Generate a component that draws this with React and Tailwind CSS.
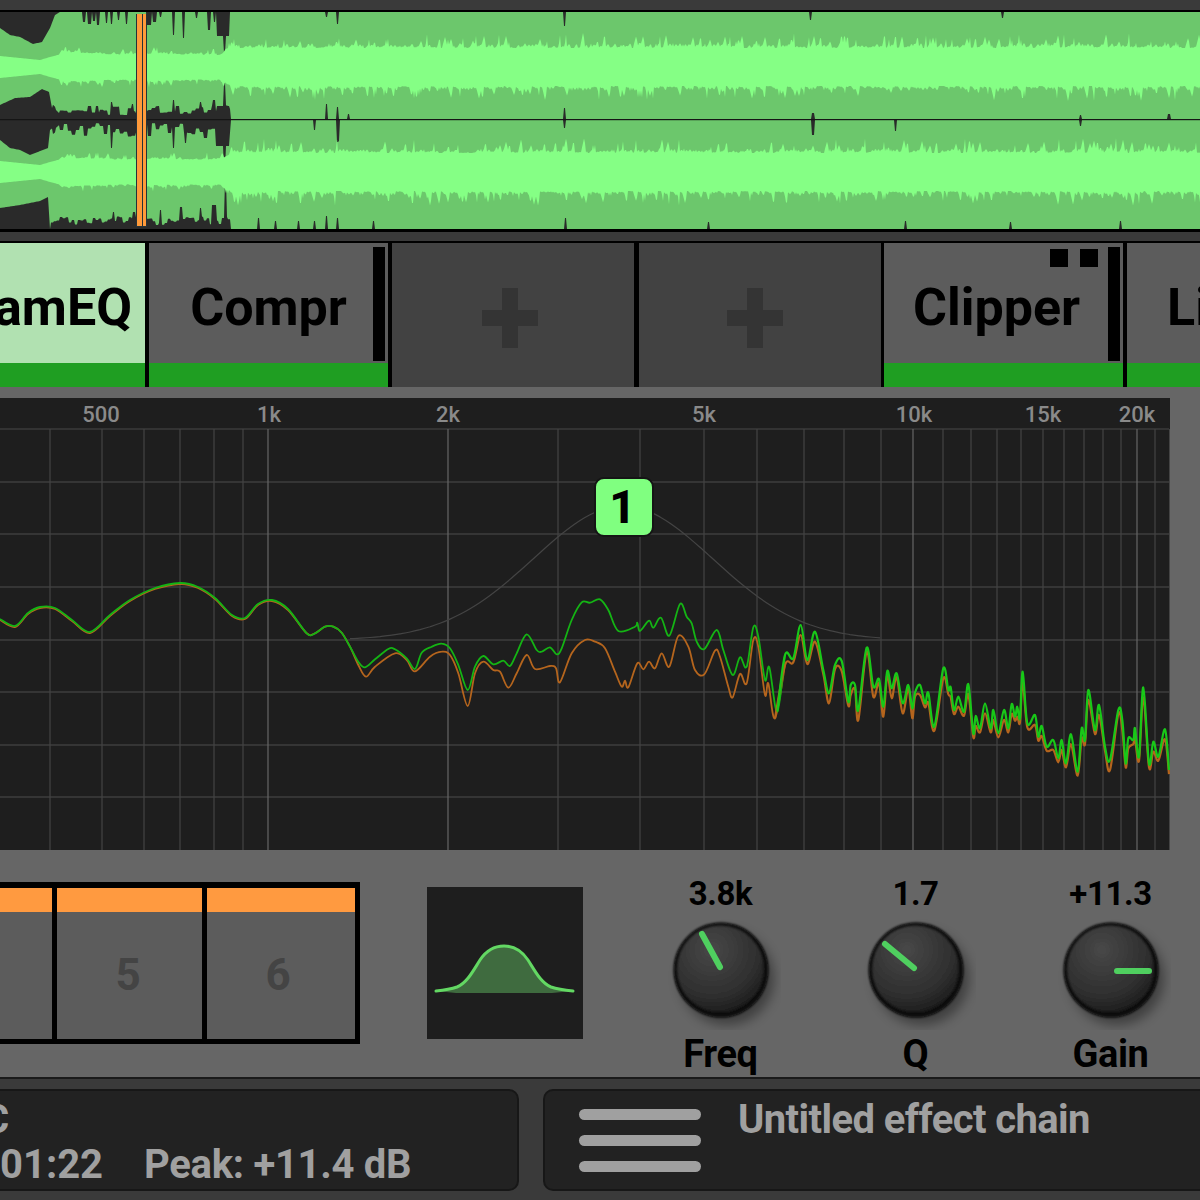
import React from 'react';

// small seeded generator so the waveform is the same on every render
const makeRand = (seed) => () => {
  seed = (seed * 1664525 + 1013904223) % 4294967296;
  return seed / 4294967296;
};

const lerp = (pts, x) => {
  for (let i = 1; i < pts.length; i++) {
    if (x <= pts[i][0]) {
      const [x0, y0] = pts[i - 1];
      const [x1, y1] = pts[i];
      return y0 + ((y1 - y0) * (x - x0)) / (x1 - x0 || 1);
    }
  }
  return pts[pts.length - 1][1];
};

const applySpikes = (arr, spikes, isTop) => {
  spikes.forEach(([x, y, w = 2]) => {
    for (let i = x; i < x + w; i++) arr[i] = isTop ? Math.max(arr[i], y) : Math.min(arr[i], y);
  });
};

const band = (top, bot) => {
  const a = top.map((y, x) => `${x},${y.toFixed(1)}`);
  const b = bot.map((y, x) => `${x},${y.toFixed(1)}`).reverse();
  return `M${a.join('L')}L${b.join('L')}Z`;
};

const buildWave = () => {
  const r = makeRand(71);
  const N = 1201;
  const col = (fn) => Array.from({ length: N }, (_, x) => fn(x));
  // noise held for a few pixels, the dark part near the axis is blocky
  const blocky = (amp, size) => {
    const out = [];
    let v = 0;
    for (let x = 0; x < N; x++) {
      if (x % size === 0) v = r() * amp;
      out.push(v);
    }
    return out;
  };
  const n1 = blocky(9, 4);
  const n2 = blocky(15, 4);
  const n3 = blocky(9, 3);

  const t1 = col((x) => lerp([[0, 28], [10, 35], [20, 37], [33, 44], [42, 42], [50, 28], [55, 15], [60, 12], [1200, 12]], x));
  const b1 = col((x) => lerp([[0, 105], [15, 98], [30, 97], [42, 89], [49, 92], [52, 108], [60, 116], [230, 114], [231, 119], [1200, 119]], x) - (x > 52 && x < 231 ? n1[x] : 0));
  const t2 = col((x) => lerp([[0, 140], [10, 148], [20, 150], [30, 155], [48, 148], [50, 130], [60, 122], [230, 124], [231, 120], [1200, 120]], x) + (x > 52 && x < 231 ? n2[x] : 0));
  const b2 = col((x) => lerp([[0, 208], [20, 205], [40, 201], [48, 197], [50, 229], [1200, 229]], x) - (x > 50 && x < 231 ? 4 + n3[x] : 0));

  applySpikes(t1, [[83, 22, 3], [88, 24, 4], [93, 21, 3], [97, 25, 3], [106, 23, 2], [111, 24, 2], [118, 20, 2], [126, 24, 2], [147, 25, 5], [153, 22, 4], [160, 17, 2], [173, 35, 2], [183, 38, 2], [196, 18, 2], [208, 30, 3], [214, 22, 2], [217, 36, 13], [224, 53, 2], [326, 17, 2], [337, 24, 2], [564, 26, 2], [810, 20, 2], [1002, 18, 2]], true);
  applySpikes(b1, [[88, 106, 4], [96, 106, 3], [111, 102, 2], [132, 104, 2], [173, 100, 2], [200, 102, 2], [213, 100, 3], [217, 106, 13], [224, 83, 2], [326, 104, 2], [337, 107, 2], [348, 114, 2], [564, 108, 2], [812, 113, 3], [1080, 115, 2], [1168, 114, 3]], false);
  applySpikes(t2, [[111, 148, 2], [173, 148, 2], [185, 143, 2], [216, 146, 14], [224, 168, 2], [314, 130, 2], [337, 142, 2], [338, 141, 2], [564, 128, 2], [812, 135, 3], [895, 131, 2], [1080, 126, 2]], true);
  applySpikes(b2, [[113, 212, 2], [133, 212, 3], [160, 210, 2], [180, 207, 3], [200, 208, 2], [212, 205, 5], [225, 180, 2], [258, 218, 2], [275, 221, 2], [298, 221, 2], [314, 221, 2], [326, 216, 2], [337, 218, 2], [373, 221, 2], [565, 218, 2], [708, 222, 2], [905, 221, 2], [1010, 222, 2], [1120, 221, 2]], false);

  const hw = (x) => lerp([[0, 11], [40, 7], [50, 10], [65, 14], [130, 12], [150, 13], [220, 12], [232, 19], [1200, 19]], x);
  // wide teeth on the bright band, a few pixels each
  const teeth = () => {
    const out = col(() => 0);
    let x = 60;
    while (x < N) {
      const w = 2 + Math.floor(r() * 3);
      const h = (r() > 0.72 ? 6 + r() * 9 : r() * 5) * (x < 230 ? 0.5 : 1);
      for (let i = x; i < Math.min(x + w, N); i++) out[i] = h * (1 - Math.abs(i - x - w / 2) / (w * 0.8));
      x += w;
    }
    return out;
  };
  const inner = (c) => {
    const up = teeth();
    const down = teeth();
    return [col((x) => c - hw(x) - up[x]), col((x) => c + hw(x) + down[x])];
  };
  const [i1t, i1b] = inner(67);
  const [i2t, i2b] = inner(172);

  return { mid: band(t1, b1) + band(t2, b2), high: band(i1t, i1b) + band(i2t, i2b) };
};

const wave = buildWave();

const Waveform = () => (
  <svg viewBox="0 0 1200 217" className="block w-[1200px] h-[217px] bg-[#2a2a2a]">
    <g transform="translate(0,-12)">
      <path d={wave.mid} fill="#6cc76c" />
      <path d={wave.high} fill="#85ff85" />
      <rect x="0" y="119.2" width="1200" height="1" fill="#111" />
      <rect x="136" y="14" width="11" height="213" fill="#263238" />
      <rect x="137" y="14" width="5" height="212" fill="#ff9a3a" />
      <rect x="143" y="14" width="3" height="212" fill="#ff9a3a" />
    </g>
  </svg>
);

const vLines = [50, 102, 144, 180, 214, 243, 268, 448, 558, 640, 704, 757, 804, 844, 881, 913, 943, 971, 997, 1021, 1043, 1064, 1084, 1103, 1121, 1137, 1155];
const hLines = [482, 534, 587, 640, 692, 745, 797];
const freqLabels = [['500', 101], ['1k', 269], ['2k', 448], ['5k', 704], ['10k', 914], ['15k', 1043], ['20k', 1137]];

const z6 = (pts) => pts.map(([x, y]) => [300 + x / 3, 470 + y / 3]);
const z7 = (pts) => pts.map(([x, y]) => [780 + x / 3, 600 + y / 3]);

const leftPart = [[0, 619], [15, 626], [28, 613], [40, 607], [55, 608], [72, 620], [90, 632], [110, 615], [130, 600], [155, 588], [180, 583], [198, 587], [215, 598], [232, 615], [245, 618], [258, 604], [272, 600], [288, 609]];

const greenMid = z6([[20, 490], [45, 490], [75, 470], [100, 470], [125, 488], [150, 530], [175, 575], [195, 592], [225, 568], [265, 537], [285, 538], [320, 565], [345, 597], [365, 548], [395, 530], [425, 521], [450, 535], [475, 585], [503, 660], [525, 590], [550, 558], [580, 583], [610, 572], [630, 588], [650, 550], [680, 493], [710, 540], [725, 545], [750, 532], [770, 553], [785, 535], [815, 450], [845, 397], [870, 398], [900, 388], [925, 420], [955, 483], [1005, 470], [1012, 458], [1020, 483], [1047, 452], [1060, 473], [1083, 443], [1108, 497], [1140, 402], [1160, 440], [1175, 460], [1190, 515], [1213, 537], [1250, 480], [1270, 540], [1298, 615], [1320, 562], [1340, 590], [1360, 472], [1375, 500], [1395, 630], [1408, 592], [1432, 725]]);
const orangeMid = z6([[20, 490], [45, 490], [75, 470], [100, 470], [125, 488], [150, 530], [175, 585], [198, 620], [225, 590], [285, 550], [320, 570], [345, 604], [390, 560], [425, 545], [450, 555], [475, 610], [503, 708], [525, 610], [550, 575], [580, 600], [600, 605], [625, 653], [650, 610], [680, 555], [705, 597], [750, 588], [768, 595], [780, 637], [815, 550], [855, 510], [885, 515], [915, 535], [945, 605], [965, 650], [975, 632], [985, 652], [1012, 580], [1030, 598], [1047, 575], [1065, 595], [1085, 550], [1108, 590], [1135, 498], [1165, 530], [1185, 600], [1213, 613], [1245, 542], [1260, 560], [1285, 650], [1298, 682], [1320, 612], [1340, 640], [1360, 510], [1375, 530], [1395, 675], [1405, 640], [1425, 745]]);
const tail = z7([[15, 165], [40, 175], [62, 75], [82, 180], [105, 95], [130, 210], [147, 280], [165, 195], [185, 183], [205, 305], [212, 255], [225, 255], [235, 330], [260, 143], [280, 260], [297, 237], [310, 320], [322, 213], [335, 265], [350, 220], [368, 310], [385, 255], [397, 325], [405, 278], [420, 255], [435, 310], [445, 278], [463, 380], [490, 205], [505, 270], [512, 262], [522, 330], [535, 290], [552, 335], [565, 253], [580, 400], [587, 348], [600, 385], [615, 310], [632, 385], [640, 330], [655, 400], [672, 330], [685, 385], [695, 312], [705, 350], [712, 320], [720, 355], [728, 215], [742, 370], [765, 345], [775, 410], [785, 378], [800, 440], [820, 420], [835, 475], [845, 420], [858, 490], [873, 403], [893, 515], [905, 385], [915, 420], [925, 270], [945, 390], [957, 315], [975, 440], [990, 480], [1015, 330], [1027, 360], [1037, 490], [1045, 415], [1060, 420], [1065, 385], [1077, 470], [1090, 262], [1107, 490], [1120, 425], [1135, 470], [1155, 388], [1167, 510]]);

// catmull-rom through the read-off points, the curve in the picture is smooth
const spline = (pts) => {
  let d = `M${pts[0][0].toFixed(1)},${pts[0][1].toFixed(1)}`;
  for (let i = 0; i < pts.length - 1; i++) {
    const p0 = pts[Math.max(i - 1, 0)];
    const p1 = pts[i];
    const p2 = pts[i + 1];
    const p3 = pts[Math.min(i + 2, pts.length - 1)];
    const c1 = [p1[0] + (p2[0] - p0[0]) / 6, p1[1] + (p2[1] - p0[1]) / 6];
    const c2 = [p2[0] - (p3[0] - p1[0]) / 6, p2[1] - (p3[1] - p1[1]) / 6];
    d += `C${c1[0].toFixed(1)},${c1[1].toFixed(1)} ${c2[0].toFixed(1)},${c2[1].toFixed(1)} ${p2[0].toFixed(1)},${p2[1].toFixed(1)}`;
  }
  return d;
};

const orangeEnd = tail.map(([x, y], i) => [x, y + (i % 2 ? 4 : 10)]);
const greenLine = spline([...leftPart, ...greenMid, tail[0]]);
const orangeLine = spline([...leftPart.map(([x, y]) => [x, y + 1]), ...orangeMid, orangeEnd[0]]);
const greenTail = spline([greenMid[greenMid.length - 1], ...tail]);
const orangeTail = spline([orangeMid[orangeMid.length - 1], ...orangeEnd]);

const bell = spline(Array.from({ length: 54 }, (_, i) => {
  const x = 350 + i * 10;
  return [x, 640 - 134 * Math.exp(-((x - 623) ** 2) / 16090)];
}));

const EqGraph = () => (
  <div className="relative w-[1170px] h-[452px] bg-[#1e1e1e]">
    <svg viewBox="0 398 1170 452" className="block w-[1170px] h-[452px]">
      {hLines.map((y) => <line key={y} x1="0" x2="1169" y1={y} y2={y} stroke="#4c4c4c" strokeWidth="1.2" />)}
      <line x1="0" x2="1169" y1="429" y2="429" stroke="#484848" />
      {vLines.map((x) => <line key={x} x1={x} x2={x} y1="429" y2="850" stroke={x === 268 || x === 448 || x === 913 || x === 1137 ? '#666' : '#444'} strokeWidth="1.2" />)}
      <line x1="1169.5" x2="1169.5" y1="429" y2="850" stroke="#444" />
      {freqLabels.map(([t, x]) => (
        <text key={t} x={x} y="422" textAnchor="middle" fontSize="22" fontWeight="500" fill="#8a8a8a">{t}</text>
      ))}
      <path d={bell} fill="none" stroke="#444" strokeWidth="1.2" />
      <path d={orangeLine} fill="none" stroke="#b5651d" strokeWidth="1.8" />
      <path d={greenLine} fill="none" stroke="#14b414" strokeWidth="1.8" />
      <path d={orangeTail} fill="none" stroke="#b5651d" strokeWidth="2.2" />
      <path d={greenTail} fill="none" stroke="#18c818" strokeWidth="2.2" />
    </svg>
    <div className="absolute left-[594px] top-[79px] w-[60px] h-[60px] rounded-[10px] border-2 border-[#151515] bg-[#80ff80] flex items-center justify-center pr-[3px] text-[46px] font-extrabold text-black leading-none">1</div>
  </div>
);

const PlusIcon = ({ className }) => (
  <svg viewBox="0 0 56 60" className={className}>
    <rect x="20" y="0" width="16" height="60" fill="#343434" />
    <rect x="0" y="22" width="56" height="16" fill="#343434" />
  </svg>
);

const Knob = ({ x2, y2, x1, y1, id }) => (
  <svg viewBox="0 0 120 120" className="block w-[120px] h-[120px]">
    <defs>
      <radialGradient id={`face-${id}`} cx="0.4" cy="0.28" r="0.8">
        <stop offset="0" stopColor="#484848" />
        <stop offset="0.7" stopColor="#2d2d2d" />
        <stop offset="1" stopColor="#161616" />
      </radialGradient>
      <filter id={`blur-${id}`} x="-30%" y="-30%" width="160%" height="160%">
        <feGaussianBlur stdDeviation="6" />
      </filter>
      <filter id={`soft-${id}`} x="-10%" y="-10%" width="120%" height="120%">
        <feGaussianBlur stdDeviation="1.2" />
      </filter>
    </defs>
    <circle cx="66" cy="68" r="47" fill="#000" opacity="0.38" filter={`url(#blur-${id})`} />
    <circle cx="60" cy="60" r="47.5" fill="#070707" filter={`url(#soft-${id})`} />
    <circle cx="59.5" cy="59" r="43.5" fill={`url(#face-${id})`} filter={`url(#soft-${id})`} />
    <line x1={x1} y1={y1} x2={x2} y2={y2} stroke="#4fcf5f" strokeWidth="6" strokeLinecap="round" />
  </svg>
);

const knobs = [
  { id: 'f', value: '3.8k', label: 'Freq', x1: 41, y1: 24, x2: 59, y2: 57 },
  { id: 'q', value: '1.7', label: 'Q', x1: 29, y1: 34, x2: 58, y2: 58 },
  { id: 'g', value: '+11.3', label: 'Gain', x1: 66, y1: 61, x2: 98, y2: 61 },
];

const EffectTab = ({ name, bar, squares, className, textClass }) => (
  <div className={`relative flex flex-col h-full shrink-0 ${className}`}>
    <div className={`relative flex-1 flex items-center pt-[10px] overflow-hidden ${textClass}`}>
      <span className="text-[52px] font-bold leading-none text-black">{name}</span>
    </div>
    <div className="h-[24px] bg-[#1f9e22]" />
    {bar && <div className="absolute top-[4px] right-[3px] w-[12px] h-[114px] bg-black" />}
    {squares && (
      <div className="absolute top-[6px] right-[25px] flex gap-[12px]">
        <div className="w-[18px] h-[18px] bg-black" />
        <div className="w-[18px] h-[18px] bg-black" />
      </div>
    )}
  </div>
);

const EmptyTab = ({ className, iconClass }) => (
  <div className={`h-full shrink-0 bg-[#424242] flex items-center justify-center pt-[6px] ${className}`}>
    <PlusIcon className={`w-[56px] h-[60px] ${iconClass}`} />
  </div>
);

export default function App() {
  return (
    <div className="w-[1200px] h-[1200px] overflow-hidden bg-[#666666] font-['Roboto',sans-serif] flex flex-col">
      <div className="h-[10px] bg-[#3a3a3a]" />
      <div className="h-[2px] bg-black" />
      <Waveform />
      <div className="h-[3px] bg-black" />
      <div className="h-[9px] bg-[#3a3a3a]" />
      <div className="h-[2px] bg-black" />

      <div className="h-[144px] flex bg-black overflow-hidden">
        <EffectTab name="amEQ" className="w-[145px] bg-[#b1e1b1] mr-[4px]" textClass="justify-end pr-[13px]" />
        <EffectTab name="Compr" bar className="w-[239px] bg-[#5c5c5c] mr-[4px]" textClass="justify-center" />
        <EmptyTab className="w-[242px] mr-[5px]" iconClass="-ml-[6px]" />
        <EmptyTab className="w-[242px] mr-[3px]" iconClass="-ml-[10px]" />
        <EffectTab name="Clipper" bar squares className="w-[239px] bg-[#5c5c5c] mr-[4px]" textClass="justify-center pr-[14px]" />
        <EffectTab name="Li" className="w-[73px] bg-[#5c5c5c]" textClass="pl-[40px]" />
      </div>

      <div className="h-[11px]" />
      <EqGraph />

      <div className="h-[227px] flex items-start">
        <div className="mt-[32px] w-[360px] h-[162px] bg-black pr-[5px] pb-[5px] pt-[6px] flex gap-[5px]">
          {['', '5', '6'].map((n, i) => (
            <div key={i} className={`flex flex-col bg-[#5c5c5c] ${i === 0 ? 'w-[52px]' : i === 1 ? 'w-[145px]' : 'w-[148px]'}`}>
              <div className="h-[24px] bg-[#ff9a40]" />
              <div className={`flex-1 flex items-center justify-center pb-[1px] text-[44px] font-bold text-[#444444] leading-none ${i === 2 ? 'pr-[6px]' : 'pr-[3px]'}`}>{n}</div>
            </div>
          ))}
        </div>

        <div className="mt-[37px] ml-[67px] w-[156px] h-[152px] bg-[#1e1e1e]">
          <svg viewBox="0 0 156 152" className="block w-[156px] h-[152px]">
            <path d="M9,104 C18,103 24,102 30,100 C40,96 46,84 53,73 C59,64 68,59 77,59 C86,59 95,64 101,73 C108,84 114,96 124,100 C130,102 136,103 146,104 L125,106 L29,106 Z" fill="#3f6b3f" />
            <path d="M9,104 C18,103 24,102 30,100 C40,96 46,84 53,73 C59,64 68,59 77,59 C86,59 95,64 101,73 C108,84 114,96 124,100 C130,102 136,103 146,104" fill="none" stroke="#63d863" strokeWidth="3" strokeLinecap="round" />
          </svg>
        </div>

        <div className="ml-[40px] flex">
          {knobs.map((k) => (
            <div key={k.id} className="w-[195px] flex flex-col items-center mt-[24px]">
              <div className="h-[38px] flex items-center text-[33px] font-bold text-black leading-none tracking-[-0.4px]">{k.value}</div>
              <div className="-mt-[2px] h-[120px]">
                <Knob {...k} />
              </div>
              <div className="mt-[3px] h-[42px] flex items-center text-[38px] font-bold text-black leading-none tracking-[-0.4px]">{k.label}</div>
            </div>
          ))}
        </div>
      </div>

      <div className="h-[2px] bg-[#1a1a1a]" />
      <div className="flex-1 bg-[#3a3a3a] pt-[10px] flex gap-[24px]">
        <div className="w-[519px] h-[102px] rounded-r-[10px] border-2 border-l-0 border-[#171717] bg-[#222222] text-[#a0a0a0] font-bold leading-none overflow-hidden">
          <div className="text-[40px] -ml-[17px] mt-[9px]">C</div>
          <div className="text-[40px] mt-[5px] flex">
            <span className="shrink-0">01:22</span>
            <span className="ml-[41px] tracking-[-0.3px]">Peak: +11.4 dB</span>
          </div>
        </div>
        <div className="flex-1 h-[102px] rounded-l-[10px] border-2 border-r-0 border-[#171717] bg-[#222222] flex items-start">
          <div className="ml-[34px] mt-[18px] w-[122px] flex flex-col gap-[15px]">
            <div className="h-[11px] rounded-full bg-[#a0a0a0]" />
            <div className="h-[11px] rounded-full bg-[#a0a0a0]" />
            <div className="h-[11px] rounded-full bg-[#a0a0a0]" />
          </div>
          <div className="ml-[37px] mt-[9px] text-[40px] font-bold leading-none text-[#a0a0a0] tracking-[-0.6px]">Untitled effect chain</div>
        </div>
      </div>
    </div>
  );
}
